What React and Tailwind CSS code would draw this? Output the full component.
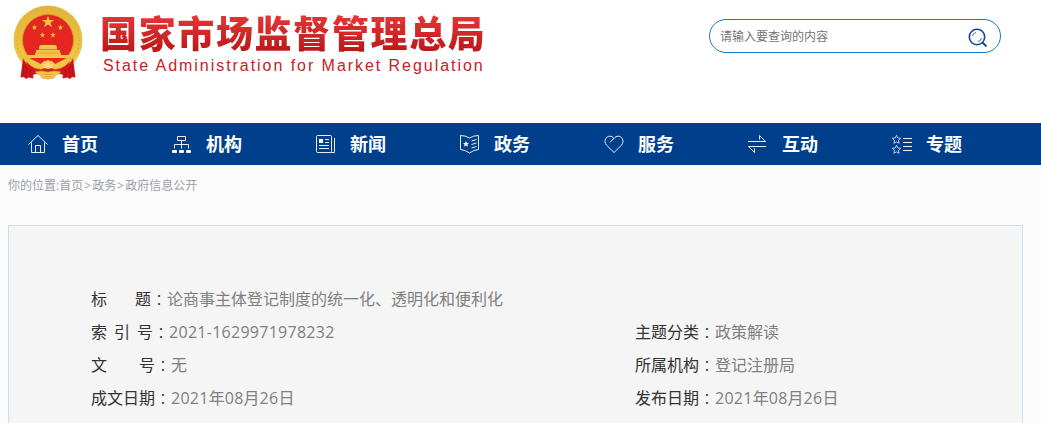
const navItems = [
  { label: '首页', icon: HomeIcon },
  { label: '机构', icon: OrgIcon },
  { label: '新闻', icon: NewsIcon },
  { label: '政务', icon: PolicyIcon },
  { label: '服务', icon: HeartIcon },
  { label: '互动', icon: SwapIcon },
  { label: '专题', icon: TopicIcon },
];

function NavSvg({ children }) {
  return (
    <svg width="20" height="20" viewBox="0 0 20 20" fill="none" stroke="#e8eef7" strokeWidth="1" className="shrink-0">
      {children}
    </svg>
  );
}

function HomeIcon() {
  return (
    <NavSvg>
      <path d="M0.5 10.5 10 1.5l9.5 9M3.5 8.5v10h13v-10M7.5 18.5v-7h5v7" />
    </NavSvg>
  );
}

function OrgIcon() {
  return (
    <NavSvg>
      <path d="M5.5 2.5h8v4h-8zM9.5 6.5v8M2.5 14.5v-4h14v4" />
      <g fill="#ffffff" stroke="none">
        <rect x="0" y="16" width="5" height="3" rx="1" />
        <rect x="7" y="16" width="5" height="3" rx="1" />
        <rect x="14" y="16" width="5" height="3" rx="1" />
      </g>
    </NavSvg>
  );
}

function NewsIcon() {
  return (
    <NavSvg>
      <rect x="0.5" y="1.5" width="15" height="17" rx="1" />
      <path d="M18.5 4v14.5H15M9 5.5h4M9 8.5h4M3 11.5h10M3 14.5h10" />
      <rect x="3" y="5" width="4" height="4" fill="#ffffff" stroke="none" />
    </NavSvg>
  );
}

function PolicyIcon() {
  return (
    <NavSvg>
      <path d="M0.5 1.5q5 0 9 2.5 4-2.5 9-2.5v14q-5 .5-9 3.500-4-3-9-3.500zM11.500 7l5-1.500M11.500 10.500l5-1.500M11.500 14l5-1.500" />
      <path d="m6 7 .9 2 2.1.2-1.6 1.4.5 2.1L6 11.600l-1.900 1.100.5-2.100L3 9.200 5.100 9z" fill="#ffffff" stroke="none" />
    </NavSvg>
  );
}

function HeartIcon() {
  return (
    <NavSvg>
      <path d="M10 18.500 2.400 11C.8 9.200.6 6.500 1.800 4.500 3.800 1.300 8 1.500 10 4.500c2-3 6.200-3.200 8.200 0 1.200 2 1 4.700-.6 6.500zM10 4.500C8.500 5.500 7.500 6.500 6 8.500" />
    </NavSvg>
  );
}

function SwapIcon() {
  return (
    <NavSvg>
      <path d="M0 7.500h17.500L11.500 1.500v4M18 12.500H.5l6 6v-4" />
    </NavSvg>
  );
}

function TopicIcon() {
  return (
    <NavSvg>
      <path d="m4.500 1.300 1.200 2.600 3 .4-2.200 2 .6 3-2.600-1.400-2.600 1.400.6-3-2.200-2 3-.4z" strokeWidth=".8" />
      <path d="m4.500 11.300 1.200 2.600 3 .4-2.200 2 .6 3-2.600-1.400-2.600 1.400.6-3-2.200-2 3-.4z" strokeWidth=".8" />
      <path d="M11 4.500h9M11 8.500h9M11 12.500h9M11 16.500h9" />
    </NavSvg>
  );
}

function Emblem() {
  return (
    <svg width="72" height="78" viewBox="0 0 72 78" className="shrink-0">
      <defs>
        <linearGradient id="gold" x1="0" y1="0" x2="0" y2="1">
          <stop offset="0" stopColor="#e2b43a" />
          <stop offset="1" stopColor="#f3cb48" />
        </linearGradient>
        <path id="star" d="M0-6.500 1.500-2.100 6.200-2 2.500.8 3.800 5.300 0 2.600-3.800 5.300-2.500.8-6.200-2-1.500-2.100z" fill="#f0c63f" />
      </defs>
      <circle cx="36" cy="36" r="34.500" fill="url(#gold)" />
      <circle cx="36" cy="36" r="31" fill="none" stroke="#cf9a2c" strokeWidth="2" strokeDasharray="1 3" opacity=".35" />
      <circle cx="36" cy="36" r="25.500" fill="#e52620" stroke="#cf9428" strokeWidth=".8" />
      <use href="#star" transform="translate(36 18)" />
      <use href="#star" transform="translate(22.500 23.500) scale(.45)" />
      <use href="#star" transform="translate(48.500 23.500) scale(.45)" />
      <use href="#star" transform="translate(30.500 31) scale(.45)" />
      <use href="#star" transform="translate(41 31) scale(.45)" />
      {/* gate tower */}
      <path d="M28.500 41h15l1.500 2v2.500H27V43zM24 46h24v3H24zM23 49h26v2h9l-1 3H15l-1-3h9z" fill="#f1c648" />
      <path d="M27 45.700h18M24 49h24" stroke="#cf8a28" strokeWidth=".5" />
      {/* ribbons, wheat and gear */}
      <path d="M14 57q10 2 22 2t22-2l-6 13H20z" fill="#d91f1e" />
      <path d="M11 54l10 2 8 4q3-4 5-3 2-2 4 0 2-1 5 3l8-4 10-2-8 8q-6 4-11 3l-6-2-6 2q-6 1-11-3z" fill="#f1c648" stroke="#cf9428" strokeWidth=".4" />
      <path d="M30 62q3-4 6-4t6 4q-3 3-6 3t-6-3z" fill="#f7da70" />
      <path d="M11 54.500q3 6 9 8.500l4 6-3 2.500.5 3-5-1-2 1.500-3-2-3 .5zM61 54.500q-3 6-9 8.500l-4 6 3 2.500-.5 3 5-1 2 1.500 3-2 3 .5z" fill="#d3141b" />
      <path d="m12 60-1 12m4-9-1 10m5-8-1 7M60 60l1 12m-4-9 1 10m-5-8 1 7" stroke="#a90e15" strokeWidth=".7" />
      <path d="M23 68q6-2 13 0 7-2 13 0-2 2-5 3l-2 3-6 1-6-1-2-3q-3-1-5-3z" fill="#f1c648" stroke="#c8851f" strokeWidth=".5" />
      <path d="M31 70.500h10M33 73h6" stroke="#d99a2c" strokeWidth=".6" />
    </svg>
  );
}

function Field({ chars, gap, value }) {
  return (
    <div className="flex h-[33px] items-center">
      <span className={`flex text-[#333333] ${gap}`}>
        {chars.map((char) => (
          <span key={char}>{char}</span>
        ))}
      </span>
      <span className="w-4 font-['Noto_Sans_CJK_TC',sans-serif] font-light text-[#333333]">：</span>
      <span>{value}</span>
    </div>
  );
}

function DateText() {
  return (
    <>
      <Digits>2021</Digits>年<Digits>08</Digits>月<Digits>26</Digits>日
    </>
  );
}

function Digits({ children }) {
  return <span className="tracking-[0.27px]">{children}</span>;
}

function Separator() {
  return <span className="inline-block w-[9px] text-center">&gt;</span>;
}

export default function App() {
  return (
    <div className="h-[423px] overflow-hidden bg-[#fcfcfc] font-['Open_Sans','Noto_Sans_CJK_SC',sans-serif]">
      <header className="flex h-[123px] items-start bg-white">
        <div className="flex gap-[16px] pt-[4px] pl-[12px]">
          <Emblem />
          <div className="pt-[4px]">
            <h1 className="h-[48px] bg-linear-to-b from-[#e53636] from-15% to-[#bd1719] to-90% bg-clip-text font-['Noto_Sans_CJK_SC',sans-serif] text-[37px] leading-[48px] font-black tracking-[1.65px] whitespace-nowrap text-transparent">
              国家市场监督管理总局
            </h1>
            <p className="pl-[3px] font-['Liberation_Sans',sans-serif] text-[16px] leading-[20px] tracking-[1.95px] whitespace-nowrap text-[#c92023]">
              State Administration for Market Regulation
            </p>
          </div>
        </div>
        <div className="mt-[19px] mr-[40px] ml-auto flex h-[34px] w-[292px] items-center justify-between rounded-full border border-[#1678c8] bg-white pr-[12px] pl-[10px]">
          <span className="pt-[2px] text-[12px] text-[#757575]">请输入要查询的内容</span>
          <svg width="20" height="20" viewBox="0 0 20 20" fill="none" stroke="#16489a" className="mt-[3px]">
            <circle cx="9" cy="9" r="7.700" strokeWidth="1.600" />
            <path d="m14.500 14.500 4 4" strokeWidth="2" />
            <path d="M4.500 8Q5 5 8 4.500M13.500 10Q13 13 10 13.500" strokeWidth=".8" />
          </svg>
        </div>
      </header>

      <nav className="flex h-[42px] bg-[#003f8b] pl-[28px] text-white">
        {navItems.map(({ label, icon: Icon }) => (
          <a key={label} className="flex w-[144px] shrink-0 items-center gap-[14px] text-[18px] font-bold">
            <Icon />
            <span className="pt-px">{label}</span>
          </a>
        ))}
      </nav>

      <div className="h-[60px] pt-[12px] pl-[8px] text-[12px] leading-[18px] text-[#999fa8]">
        你的位置:首页
        <Separator />
        政务
        <Separator />
        政府信息公开
      </div>

      <main className="mr-[18px] ml-[8px] h-[240px] border border-[#cfdceb] bg-[#f5f5f5] pt-[56px] pl-[82px] text-[16px] text-[#808080]">
        <Field chars={['标', '题']} gap="gap-[28px]" value="论商事主体登记制度的统一化、透明化和便利化" />
        <div className="grid grid-cols-[544px_1fr]">
          <Field chars={['索', '引', '号']} gap="gap-[7px]" value={<Digits>2021-1629971978232</Digits>} />
          <Field chars={['主题分类']} gap="gap-0" value="政策解读" />
          <Field chars={['文', '号']} gap="gap-[32px]" value="无" />
          <Field chars={['所属机构']} gap="gap-0" value="登记注册局" />
          <Field chars={['成文日期']} gap="gap-0" value={<DateText />} />
          <Field chars={['发布日期']} gap="gap-0" value={<DateText />} />
        </div>
      </main>
    </div>
  );
}
